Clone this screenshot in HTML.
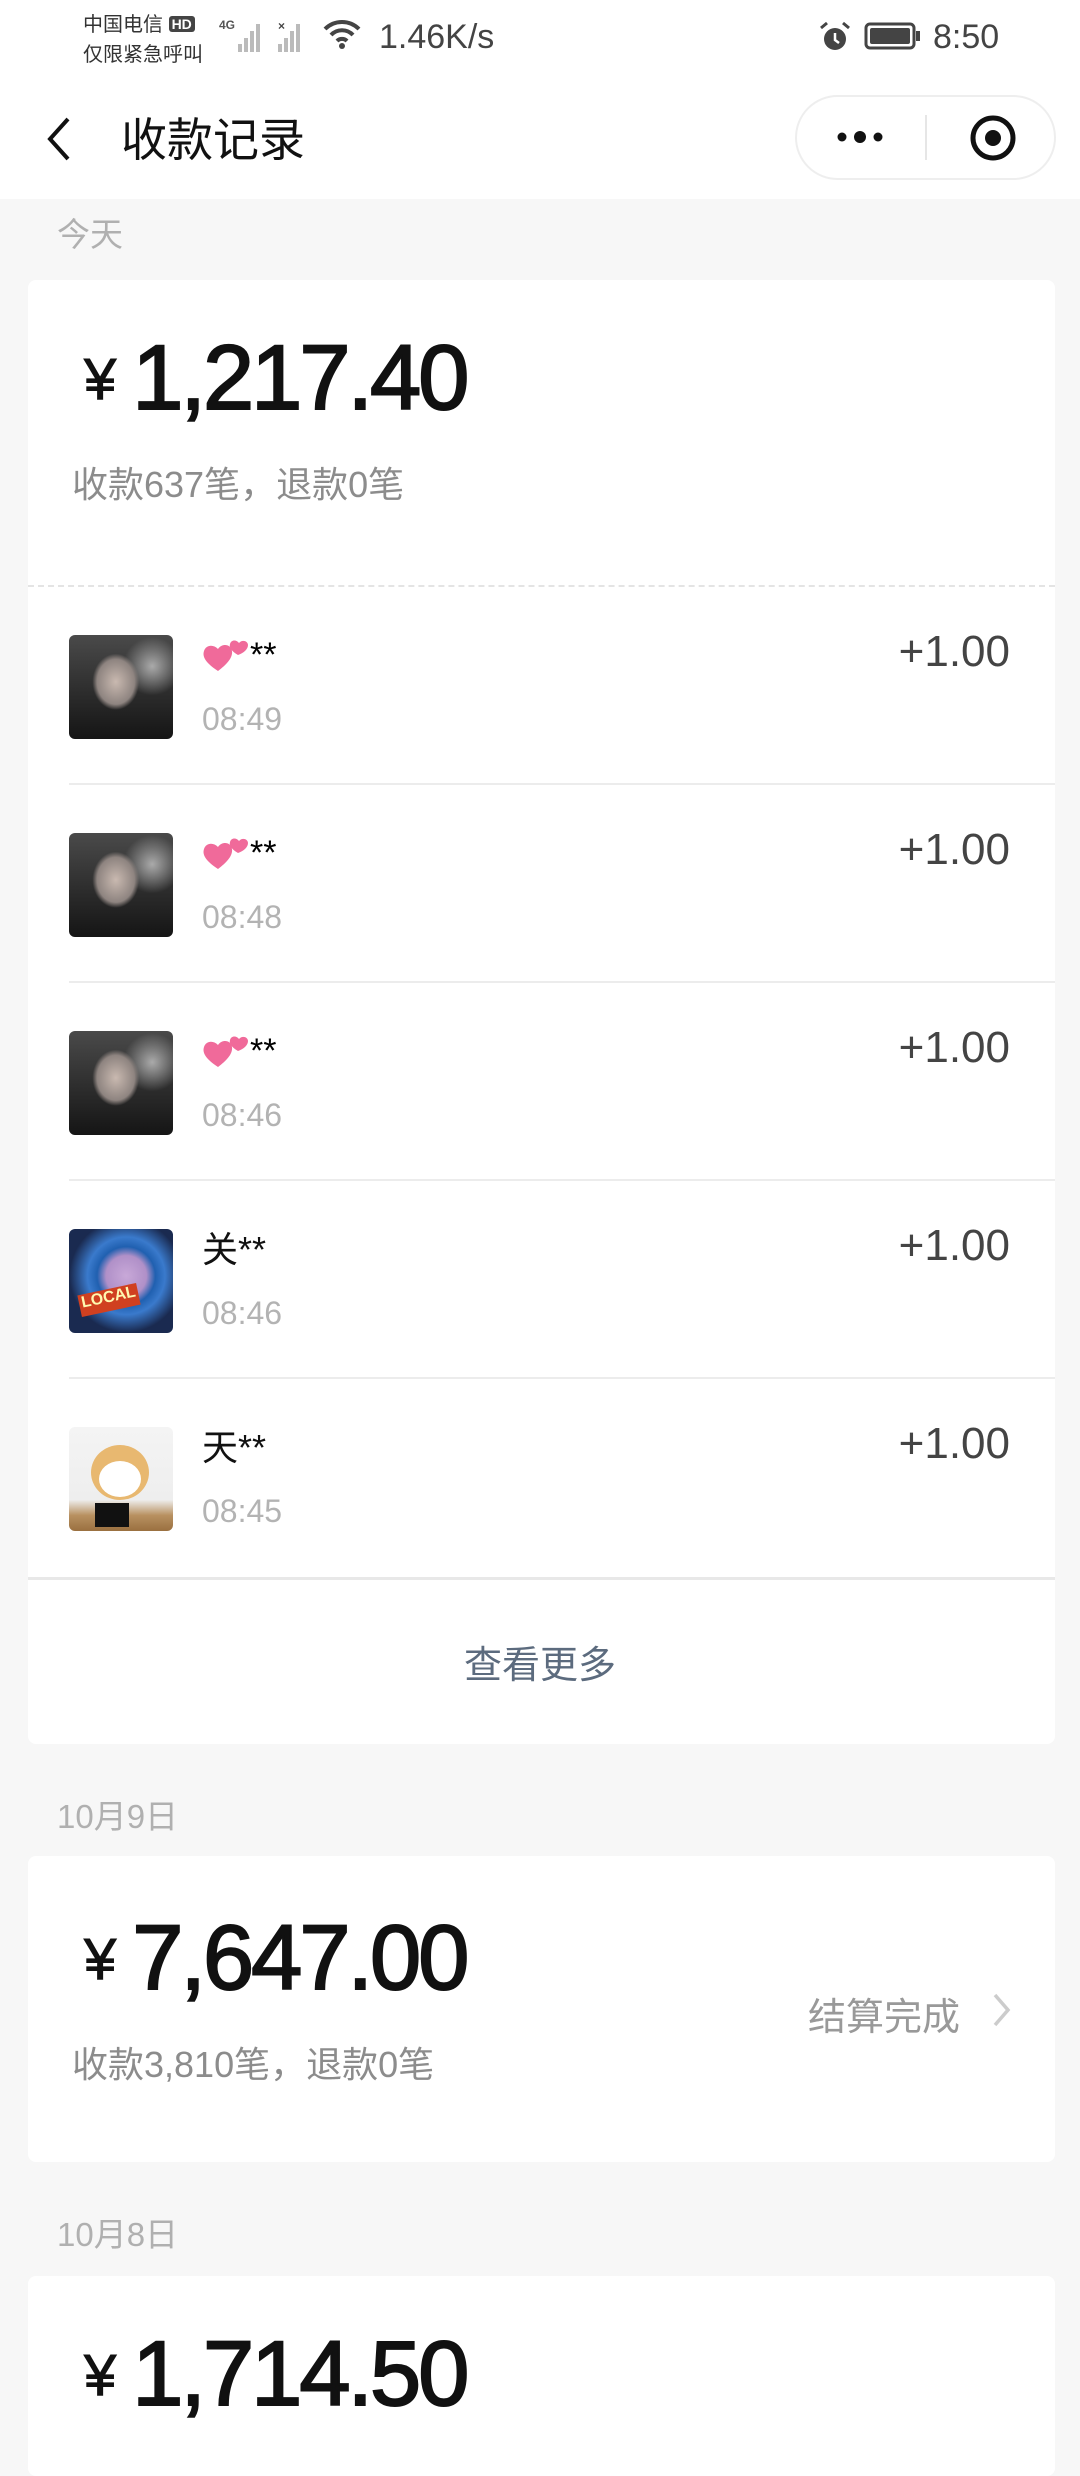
<!DOCTYPE html>
<html><head><meta charset="utf-8"><style>
*{margin:0;padding:0;box-sizing:border-box}
body{width:1080px;height:2400px;overflow:hidden;background:#f7f7f7;font-family:"Liberation Sans","Noto Sans CJK SC",sans-serif;position:relative}
.a{position:absolute;white-space:nowrap}
.card{position:absolute;left:28px;width:1027px;background:#fff;border-radius:8px}
.amt{position:absolute;left:84px;font-size:92px;font-weight:normal;-webkit-text-stroke:2px #111;color:#111;letter-spacing:-3px;line-height:1}
.amt span{font-size:58px;letter-spacing:0;margin-right:16px;vertical-align:10px;-webkit-text-stroke:1px #111}
.sub{position:absolute;left:72px;font-size:36px;color:#8c8c8c;line-height:1}
.av{position:absolute;left:69px;width:104px;height:104px;border-radius:6px;overflow:hidden}
.nm{position:absolute;left:202px;font-size:36px;color:#111;line-height:1}
.tm{position:absolute;left:202px;font-size:32px;color:#b3b3b3;line-height:1}
.ln{position:absolute;left:69px;width:986px;height:2px;background:#ececec}
.dt{position:absolute;left:57px;font-size:33px;color:#b0b0b0;line-height:1}
.face{background:radial-gradient(ellipse 30% 36% at 45% 45%,#c9b9b0 0,#8e8480 60%,transparent 75%),radial-gradient(ellipse 40% 40% at 80% 30%,#aaa,transparent 70%),linear-gradient(#4a4a4a,#151515)}
</style></head><body>
<div class="a" style="left:0;top:0;width:1080px;height:199px;background:#fff"></div>
<div class="a" style="left:83px;top:8px;font-size:20px;color:#333">中国电信 <span style="background:#444;color:#fff;font-size:14px;font-weight:bold;padding:0 3px;border-radius:3px;vertical-align:2px">HD</span></div>
<div class="a" style="left:83px;top:38px;font-size:20px;color:#333">仅限紧急呼叫</div>
<div class="a" style="left:219px;top:18px;font-size:12px;color:#555;font-weight:bold">4G</div>
<svg class="a" style="left:232px;top:18px" width="80" height="34"><g fill="#bbb"><rect x="6" y="26" width="4" height="8"/><rect x="12" y="20" width="4" height="14"/><rect x="18" y="13" width="4" height="21"/><rect x="24" y="6" width="4" height="28"/><rect x="46" y="26" width="4" height="8"/><rect x="52" y="20" width="4" height="14"/><rect x="58" y="13" width="4" height="21"/><rect x="64" y="6" width="4" height="28"/></g><text x="46" y="12" font-size="12" fill="#444" font-weight="bold">×</text></svg>
<svg class="a" style="left:322px;top:18px" width="40" height="32"><path d="M3 11a24 24 0 0 1 34 0M9 17a15 15 0 0 1 22 0M15 23a7 7 0 0 1 10 0" stroke="#444" stroke-width="4" fill="none"/><circle cx="20" cy="28" r="3" fill="#444"/></svg>
<div class="a" style="left:379px;top:18px;font-size:34px;color:#444">1.46K/s</div>
<svg class="a" style="left:818px;top:20px" width="34" height="34"><circle cx="17" cy="19" r="11" fill="#444"/><path d="M17 13v7l4 3" stroke="#fff" stroke-width="2.5" fill="none"/><path d="M3 8l6-5M31 8l-6-5" stroke="#444" stroke-width="3"/></svg>
<svg class="a" style="left:864px;top:22px" width="58" height="28"><rect x="2" y="2" width="48" height="24" rx="4" fill="none" stroke="#444" stroke-width="3"/><rect x="6" y="6" width="40" height="16" rx="2" fill="#444"/><rect x="52" y="9" width="4" height="10" fill="#444"/></svg>
<div class="a" style="left:933px;top:18px;font-size:34px;color:#444">8:50</div>
<svg class="a" style="left:40px;top:115px" width="36" height="48"><path d="M28 4L10 24l18 20" stroke="#111" stroke-width="4" fill="none"/></svg>
<div class="a" style="left:121px;top:104px;font-size:46px;color:#111">收款记录</div>
<div class="a" style="left:795px;top:95px;width:261px;height:85px;border:2px solid #eee;border-radius:43px;background:#fff"></div>
<div class="a" style="left:925px;top:115px;width:2px;height:45px;background:#e6e6e6"></div>
<svg class="a" style="left:832px;top:122px" width="56" height="30"><circle cx="10" cy="15" r="4.5" fill="#111"/><circle cx="28" cy="15" r="6" fill="#111"/><circle cx="46" cy="15" r="4.5" fill="#111"/></svg>
<svg class="a" style="left:968px;top:113px" width="50" height="50"><circle cx="25" cy="25" r="20" stroke="#111" stroke-width="5" fill="none"/><circle cx="25" cy="25" r="8" fill="#111"/></svg>

<div class="dt" style="top:218px">今天</div>
<div class="card" style="top:280px;height:1464px"></div>
<div class="amt" style="top:332px"><span>¥</span>1,217.40</div>
<div class="sub" style="top:467px">收款637笔，退款0笔</div>
<div class="a" style="left:28px;top:585px;width:1027px;border-top:2px dashed #e4e4e4"></div>

<div class="av face" style="top:635px"></div>
<div class="av face" style="top:833px"></div>
<div class="av face" style="top:1031px"></div>
<div class="av" style="top:1229px;background:radial-gradient(circle at 55% 45%,#c8a8d8 0,#b090c8 25%,#2060b0 36%,#3a7acc 48%,#1a2a50 70%)"><div style="position:absolute;left:10px;top:60px;width:60px;height:22px;background:#d04020;transform:rotate(-12deg);color:#fff8b0;font-size:16px;font-weight:bold;text-align:center">LOCAL</div></div>
<div class="av" style="top:1427px;background:linear-gradient(#f4f4f4 0,#eee 70%,#b89060 85%,#9a7040)"><div style="position:absolute;left:22px;top:18px;width:58px;height:55px;border-radius:50%;background:#e8b870"></div><div style="position:absolute;left:30px;top:34px;width:42px;height:36px;border-radius:50%;background:#fff"></div><div style="position:absolute;left:26px;top:76px;width:34px;height:24px;background:#111"></div></div>

<svg class="a" style="left:202px;top:632px" width="50" height="46" viewBox="0 0 50 40"><path d="M16 36C4 28 0 22 2 16c2-6 9-7 14-2c4-6 13-5 14 2c1 7-6 14-14 20z" fill="#f06a9a"/><path d="M36 20c-7-4-9-8-8-11c1-4 6-5 9-1c3-4 9-2 9 2c0 4-4 8-10 10z" fill="#f06a9a"/></svg>
<div class="a" style="left:250px;top:636px;font-size:34px">**</div>
<svg class="a" style="left:202px;top:830px" width="50" height="46" viewBox="0 0 50 40"><path d="M16 36C4 28 0 22 2 16c2-6 9-7 14-2c4-6 13-5 14 2c1 7-6 14-14 20z" fill="#f06a9a"/><path d="M36 20c-7-4-9-8-8-11c1-4 6-5 9-1c3-4 9-2 9 2c0 4-4 8-10 10z" fill="#f06a9a"/></svg>
<div class="a" style="left:250px;top:834px;font-size:34px">**</div>
<svg class="a" style="left:202px;top:1028px" width="50" height="46" viewBox="0 0 50 40"><path d="M16 36C4 28 0 22 2 16c2-6 9-7 14-2c4-6 13-5 14 2c1 7-6 14-14 20z" fill="#f06a9a"/><path d="M36 20c-7-4-9-8-8-11c1-4 6-5 9-1c3-4 9-2 9 2c0 4-4 8-10 10z" fill="#f06a9a"/></svg>
<div class="a" style="left:250px;top:1032px;font-size:34px">**</div>
<div class="nm" style="top:1232px">关**</div>
<div class="nm" style="top:1430px">天**</div>

<div class="tm" style="top:703px">08:49</div>
<div class="tm" style="top:901px">08:48</div>
<div class="tm" style="top:1099px">08:46</div>
<div class="tm" style="top:1297px">08:46</div>
<div class="tm" style="top:1495px">08:45</div>
<div class="a" style="right:70px;top:627px;font-size:44px;color:#444">+1.00</div>
<div class="a" style="right:70px;top:825px;font-size:44px;color:#444">+1.00</div>
<div class="a" style="right:70px;top:1023px;font-size:44px;color:#444">+1.00</div>
<div class="a" style="right:70px;top:1221px;font-size:44px;color:#444">+1.00</div>
<div class="a" style="right:70px;top:1419px;font-size:44px;color:#444">+1.00</div>
<div class="ln" style="top:783px"></div>
<div class="ln" style="top:981px"></div>
<div class="ln" style="top:1179px"></div>
<div class="ln" style="top:1377px"></div>
<div class="a" style="left:28px;top:1577px;width:1027px;height:3px;background:#e8e8e8"></div>
<div class="a" style="left:0;width:1080px;text-align:center;top:1634px;font-size:38px;color:#5c6b7e">查看更多</div>

<div class="dt" style="top:1800px">10月9日</div>
<div class="card" style="top:1856px;height:306px"></div>
<div class="amt" style="top:1912px"><span>¥</span>7,647.00</div>
<div class="sub" style="top:2047px">收款3,810笔，退款0笔</div>
<div class="a" style="left:808px;top:1986px;font-size:38px;color:#999">结算完成</div>
<svg class="a" style="left:990px;top:1990px" width="24" height="40"><path d="M5 5l13 15L5 35" stroke="#ccc" stroke-width="3.5" fill="none"/></svg>

<div class="dt" style="top:2218px">10月8日</div>
<div class="card" style="top:2276px;height:200px"></div>
<div class="amt" style="top:2328px"><span>¥</span>1,714.50</div>
</body></html>
